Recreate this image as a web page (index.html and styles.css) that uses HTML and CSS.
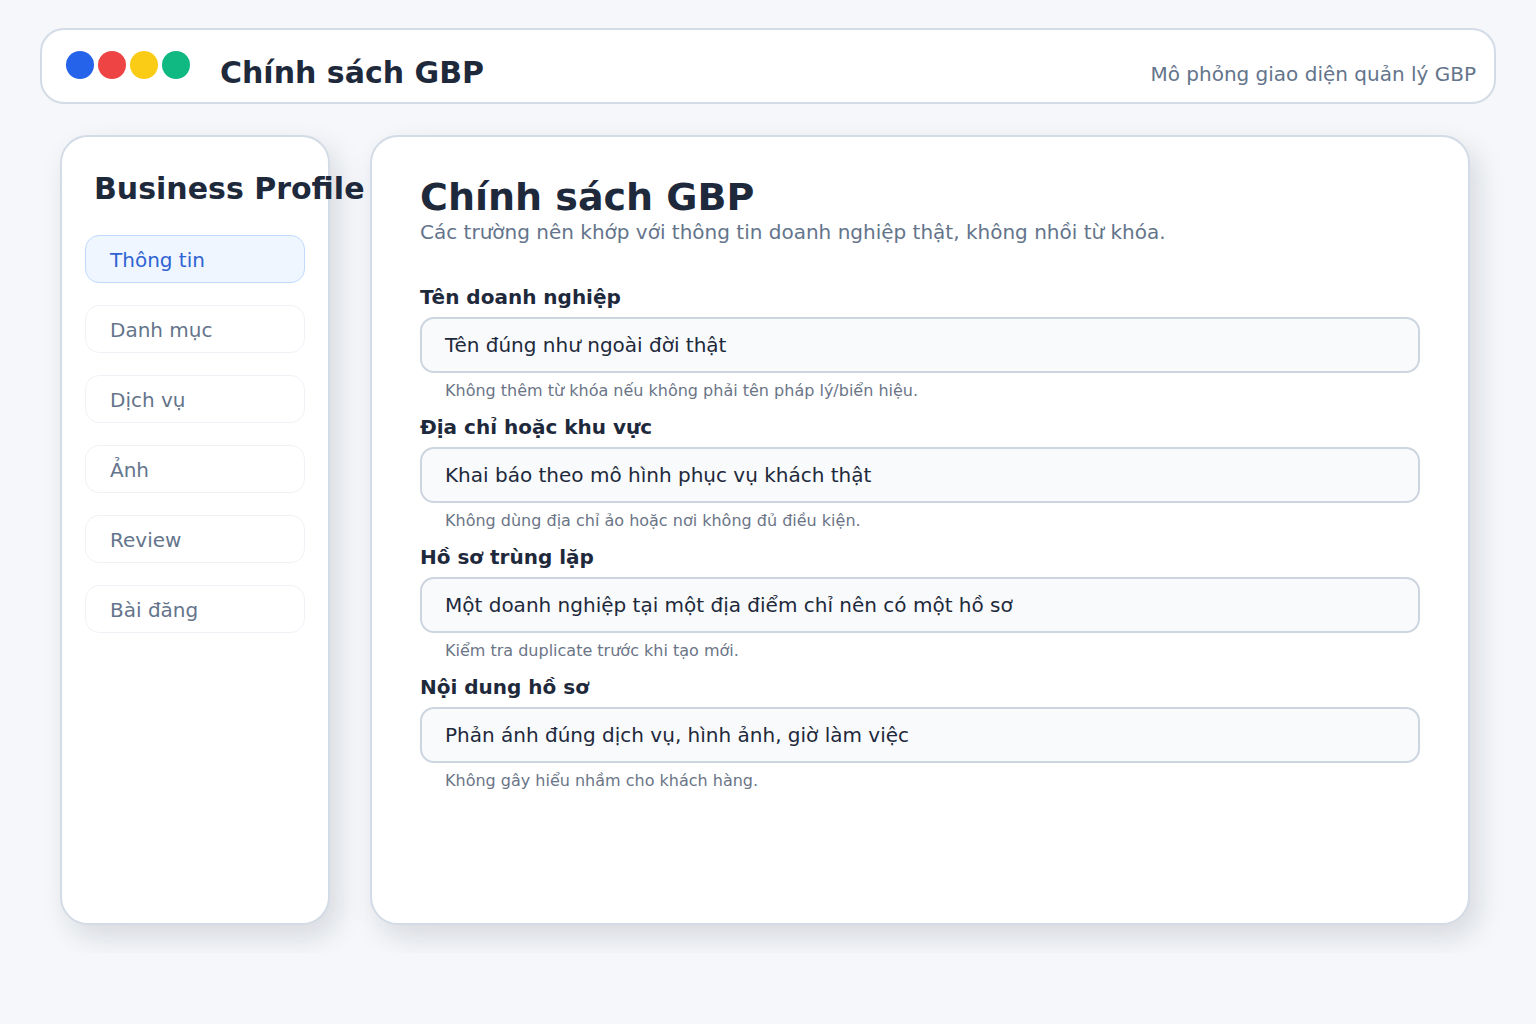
FILE: index.html
```html
<!DOCTYPE html>
<html lang="vi">
<head>
  <meta charset="UTF-8">
  <title>Chính sách GBP</title>
  <link rel="stylesheet" href="styles.css">
</head>
<body>
  <header class="topbar">
    <div class="dots">
      <span class="dot dot-blue"></span>
      <span class="dot dot-red"></span>
      <span class="dot dot-yellow"></span>
      <span class="dot dot-green"></span>
    </div>
    <div class="topbar-title">Chính sách GBP</div>
    <div class="topbar-note">Mô phỏng giao diện quản lý GBP</div>
  </header>

  <div class="layout">
    <aside class="sidebar">
      <h2 class="sidebar-title">Business Profile</h2>
      <nav class="nav">
        <div class="nav-item active">Thông tin</div>
        <div class="nav-item">Danh mục</div>
        <div class="nav-item">Dịch vụ</div>
        <div class="nav-item">Ảnh</div>
        <div class="nav-item">Review</div>
        <div class="nav-item">Bài đăng</div>
      </nav>
    </aside>

    <main class="panel">
      <h1 class="panel-title">Chính sách GBP</h1>
      <p class="panel-desc">Các trường nên khớp với thông tin doanh nghiệp thật, không nhồi từ khóa.</p>

      <div class="form">
        <div class="field">
          <div class="field-label">Tên doanh nghiệp</div>
          <div class="field-input">Tên đúng như ngoài đời thật</div>
          <div class="field-hint">Không thêm từ khóa nếu không phải tên pháp lý/biển hiệu.</div>
        </div>
        <div class="field">
          <div class="field-label">Địa chỉ hoặc khu vực</div>
          <div class="field-input">Khai báo theo mô hình phục vụ khách thật</div>
          <div class="field-hint">Không dùng địa chỉ ảo hoặc nơi không đủ điều kiện.</div>
        </div>
        <div class="field">
          <div class="field-label">Hồ sơ trùng lặp</div>
          <div class="field-input">Một doanh nghiệp tại một địa điểm chỉ nên có một hồ sơ</div>
          <div class="field-hint">Kiểm tra duplicate trước khi tạo mới.</div>
        </div>
        <div class="field">
          <div class="field-label">Nội dung hồ sơ</div>
          <div class="field-input">Phản ánh đúng dịch vụ, hình ảnh, giờ làm việc</div>
          <div class="field-hint">Không gây hiểu nhầm cho khách hàng.</div>
        </div>
      </div>
    </main>
  </div>
</body>
</html>
```

FILE: styles.css
```css
* {
  box-sizing: border-box;
}

body {
  margin: 0;
  padding: 28px 40px;
  font-family: 'DejaVu Sans', 'Noto Sans', sans-serif;
  background-color: #f5f7fa;
  color: #1e293b;
}

/* thanh trên cùng */
.topbar {
  display: flex;
  align-items: center;
  height: 76px;
  padding: 0 18px 0 24px;
  background-color: #fff;
  border: 2px solid #d3dbe6;
  border-radius: 24px;
}

.dots {
  display: flex;
  gap: 4px;
  margin-right: 30px;
  margin-top: -2px;
}

.dot {
  width: 28px;
  height: 28px;
  border-radius: 50%;
}

.dot-blue { background-color: #2563eb; }
.dot-red { background-color: #ef4444; }
.dot-yellow { background-color: #facc15; }
.dot-green { background-color: #10b981; }

.topbar-title {
  font-size: 30px;
  font-weight: bold;
  margin-top: 13px;
}

.topbar-note {
  margin-left: auto;
  margin-top: 16px;
  font-size: 20px;
  color: #64748b;
}

.layout {
  display: flex;
  gap: 40px;
  height: 790px;
  margin: 31px 20px 0;
}

/* cột trái */
.sidebar {
  width: 270px;
  flex-shrink: 0;
  padding: 34px 23px;
  background-color: #fff;
  border: 2px solid #d3dbe6;
  border-radius: 28px;
  box-shadow: 8px 12px 28px rgba(15, 23, 42, 0.13);
}

.sidebar-title {
  margin: 0 0 29px;
  padding-left: 9px;
  font-size: 30px;
  white-space: nowrap;
}

.nav {
  display: flex;
  flex-direction: column;
  gap: 22px;
}

.nav-item {
  display: flex;
  align-items: center;
  height: 48px;
  padding: 1px 24px 0;
  font-size: 20px;
  color: #64748b;
  border: 1px solid #eef2f7;
  border-radius: 14px;
}

.nav-item.active {
  background-color: #eff6ff;
  border-color: #bfdbfe;
  color: #2f63d4;
}

/* khung nội dung */
.panel {
  width: 1100px;
  flex-shrink: 0;
  padding: 38px 48px;
  background-color: #fff;
  border: 2px solid #d3dbe6;
  border-radius: 28px;
  box-shadow: 8px 12px 28px rgba(15, 23, 42, 0.13);
}

.panel-title {
  margin: 0;
  font-size: 38px;
}

.panel-desc {
  margin: 1px 0 41px;
  font-size: 20px;
  color: #64748b;
}

.form {
  display: flex;
  flex-direction: column;
  gap: 15px;
}

.field-label {
  font-size: 20px;
  font-weight: bold;
  margin-bottom: 8px;
}

.field-input {
  display: flex;
  align-items: center;
  height: 56px;
  padding: 0 23px;
  font-size: 20px;
  background-color: #f8fafc;
  border: 2px solid #cdd5e0;
  border-radius: 14px;
}

.field-hint {
  margin-top: 8px;
  padding-left: 25px;
  font-size: 16px;
  color: #6b7587;
}
```
